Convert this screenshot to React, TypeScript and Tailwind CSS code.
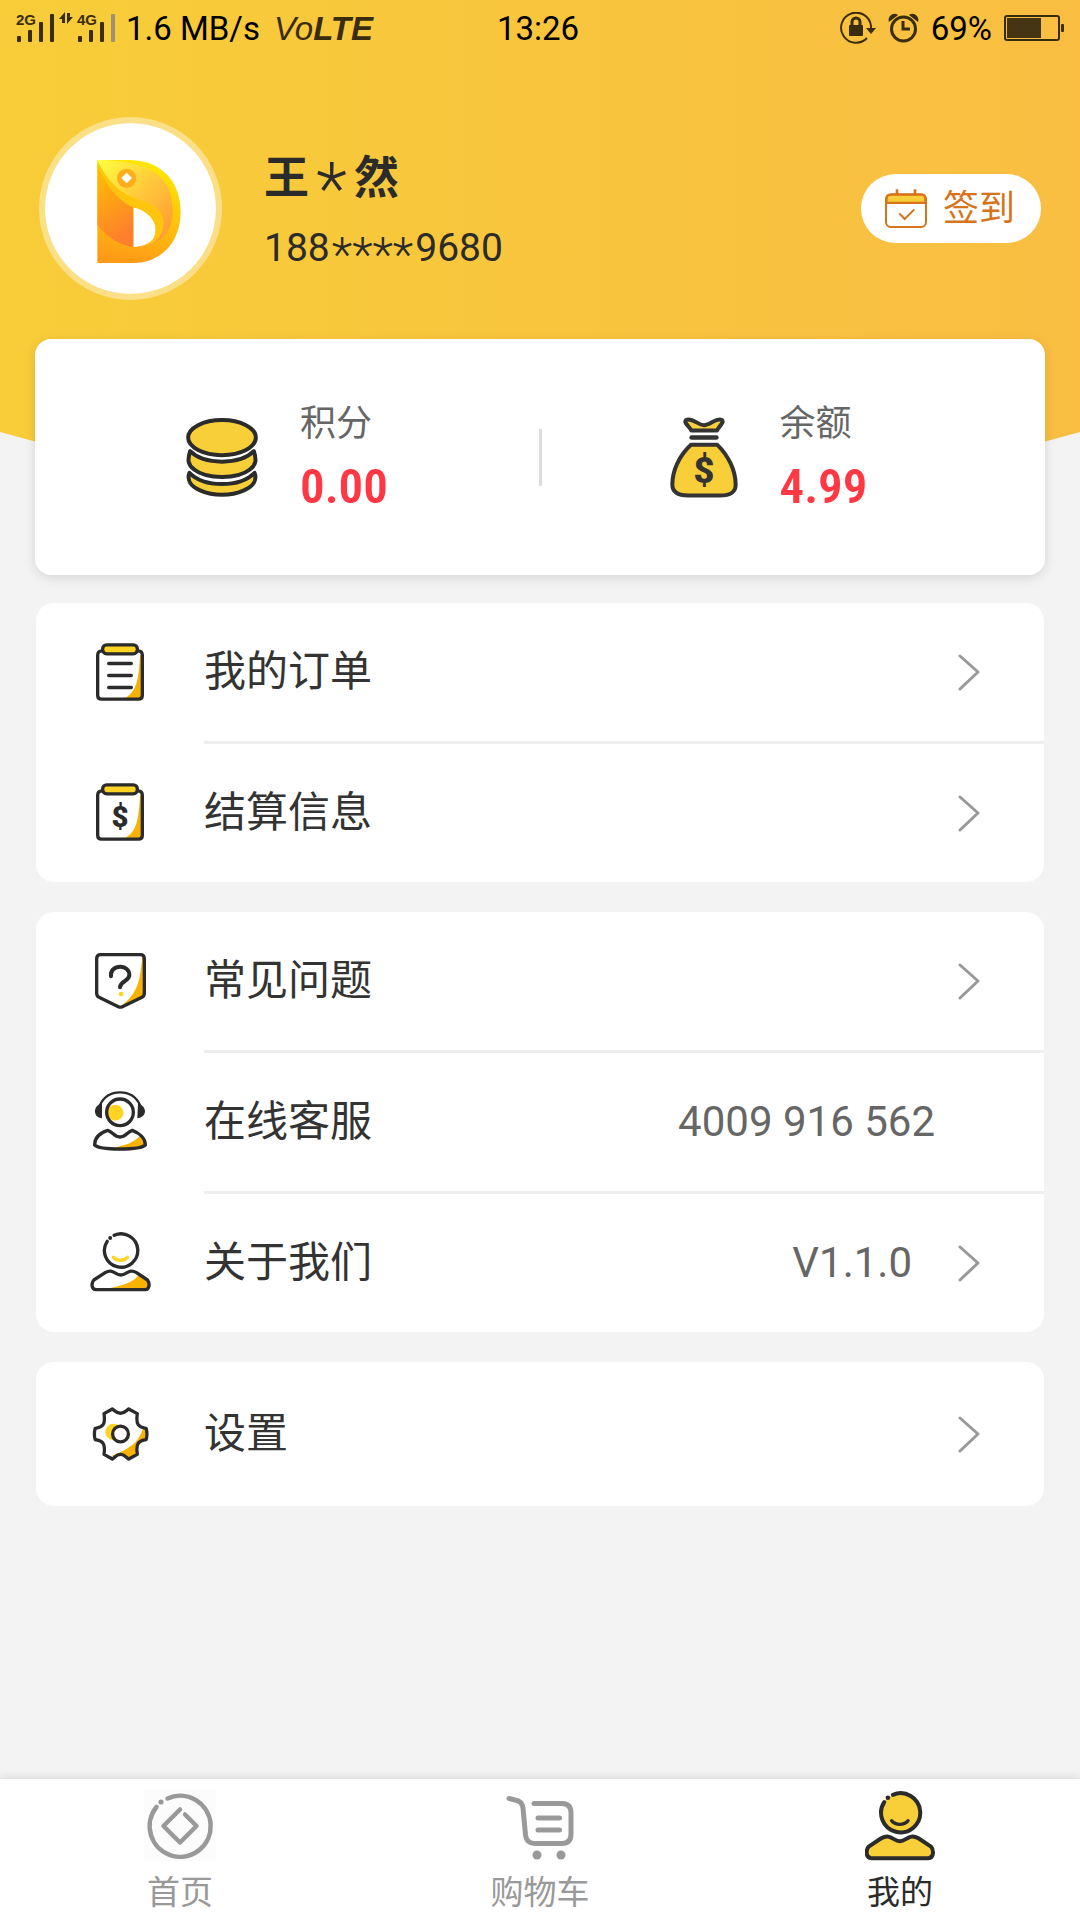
import React from "react";

const DARK = "#2b2b2b";
const YELLOW = "#f9cf39";
const AMBER = "#f9b200";

const SignalIcon = () => (
  <svg className="w-[104px] h-[38px]" viewBox="-4 -4 104 38" fill="#3a2d0f" aria-hidden="true">
    <text x="0" y="12" fontSize="15" fontWeight="700" fontFamily="Liberation Sans">2G</text>
    <rect x="1" y="23" width="4" height="6" rx="1" />
    <rect x="12" y="17" width="4" height="12" rx="1" />
    <rect x="23" y="9" width="4" height="20" rx="1" />
    <rect x="34" y="1" width="4" height="28" rx="1" />
    <path d="M43 6 49 -1V10H46V6ZM57 4 51 11V0H54V4Z" />
    <text x="61" y="12" fontSize="15" fontWeight="700" fontFamily="Liberation Sans">4G</text>
    <rect x="62" y="23" width="4" height="6" rx="1" />
    <rect x="73" y="17" width="4" height="12" rx="1" />
    <rect x="84" y="9" width="4" height="20" rx="1" />
    <rect x="95" y="1" width="4" height="28" rx="1" fill="#9c9075" />
  </svg>
);

const LockIcon = () => (
  <svg className="w-9 h-8" viewBox="0 0 36 32" fill="none" stroke="#3a2d0f" strokeWidth="2" aria-hidden="true">
    <path d="M27 26A15 15 0 1 1 31 14V17" />
    <path d="M26 16H36L31 22Z" fill="#3a2d0f" stroke="none" />
    <rect x="9" y="13" width="14" height="11" rx="1" fill="#3a2d0f" stroke="none" />
    <path d="M12 14V10a4 4 0 0 1 8 0V14" strokeWidth="3" />
  </svg>
);

const AlarmIcon = () => (
  <svg className="w-[31px] h-[30px]" viewBox="0 0 31 30" fill="none" stroke="#3a2d0f" aria-hidden="true">
    <circle cx="15.5" cy="16" r="12" strokeWidth="3" />
    <path d="M15 8V16H22" strokeWidth="3" />
    <path d="M1 9C-1 4 5-2 10 2ZM30 9C32 4 26-2 21 2Z" fill="#3a2d0f" stroke="none" />
  </svg>
);

const BatteryIcon = () => (
  <svg className="w-[60px] h-[26px]" viewBox="0 0 60 26" fill="none" aria-hidden="true">
    <rect x="1" y="1" width="54" height="24" rx="2" stroke="#3a2d0f" strokeWidth="2" />
    <rect x="3" y="3" width="34" height="20" fill="#453515" />
    <rect x="57" y="9" width="3" height="8" rx="1" fill="#3a2d0f" />
  </svg>
);

const Logo = () => (
  <svg className="w-[84px] h-[103px]" viewBox="232 180 250 309" aria-hidden="true">
    <defs>
      <linearGradient id="logoBody" x1="0.6" y1="0" x2="0.4" y2="1">
        <stop offset="0" stopColor="#ffe800" />
        <stop offset="0.5" stopColor="#ffc60b" />
        <stop offset="1" stopColor="#ff9a18" />
      </linearGradient>
      <linearGradient id="logoStem" x1="0" y1="0" x2="0.3" y2="1">
        <stop offset="0" stopColor="#ffc400" />
        <stop offset="1" stopColor="#ff7f2c" />
      </linearGradient>
      <linearGradient id="logoFish" x1="0" y1="0" x2="0.9" y2="1">
        <stop offset="0" stopColor="#ffff40" />
        <stop offset="0.5" stopColor="#ffc83a" />
        <stop offset="1" stopColor="#ff9632" />
      </linearGradient>
    </defs>
    <path
      d="M232 180H330C430 182 482 250 482 335C482 430 420 489 340 489H232ZM340 322V441C385 440 407 420 407 390C407 355 375 330 340 322Z"
      fill="url(#logoBody)"
      fillRule="evenodd"
    />
    <path d="M232 190C252 245 290 300 340 322V441C300 436 262 412 232 375Z" fill="url(#logoStem)" />
    <path
      d="M232 180C330 180 380 200 410 222C445 247 458 290 458 335C458 390 425 440 350 441C405 436 430 400 430 370C430 335 405 315 375 305C320 288 275 270 232 180Z"
      fill="url(#logoFish)"
    />
    <path d="M232 182C275 270 320 288 375 305C405 315 430 335 430 370C430 405 408 432 372 438C396 428 407 412 407 390C407 355 375 330 340 322C290 300 252 245 232 182Z" fill="#ffc50c" />
    <circle cx="320" cy="235" r="29" fill="#ffad1c" />
    <path d="M320 218 336 234 320 250 304 234Z" fill="#fff" />
  </svg>
);

const CalendarIcon = () => (
  <svg className="w-[42px] h-[39px]" viewBox="135 123 126 117" fill="none" stroke="#d6741c" strokeWidth="6" aria-hidden="true">
    <path d="M140 164V152Q140 140 152 140H244Q256 140 256 152V164Z" fill={YELLOW} />
    <rect x="138" y="139" width="120" height="98" rx="14" />
    <path d="M138 165H258" />
    <path d="M171 139V124M225 139V124" strokeWidth="8" />
    <path d="M178 196 194 213 223 184" />
  </svg>
);

const CoinsIcon = () => (
  <svg className="w-[72px] h-[79px]" viewBox="78 110 216 238" fill={YELLOW} stroke={DARK} strokeWidth="12" strokeLinejoin="round" aria-hidden="true">
    <ellipse cx="186" cy="169" rx="102" ry="53" />
    <path d="M90 210C82 235 82 250 102 265C140 295 232 295 270 265C290 250 290 235 282 210C240 252 132 252 90 210Z" />
    <path d="M88 275C80 295 90 315 120 328C160 346 212 346 252 328C282 315 292 295 284 275C240 320 132 320 88 275Z" />
  </svg>
);

const MoneyBagIcon = () => (
  <svg className="w-[68px] h-[81px]" viewBox="91 116 204 242" fill={YELLOW} stroke="#333" strokeWidth="12" strokeLinejoin="round" strokeLinecap="round" aria-hidden="true">
    <path d="M140 124C160 118 175 140 193 140C212 140 227 118 246 124C256 132 238 142 232 156H155C148 142 130 132 140 124Z" />
    <path d="M156 177H230" strokeWidth="14" />
    <path d="M154 199H233C265 230 288 275 288 318C288 340 275 351 240 351H146C112 351 98 340 98 318C98 275 120 230 154 199Z" />
    <text x="193" y="312" fontSize="108" fontWeight="900" fontFamily="Roboto" textAnchor="middle" fill="#333" stroke="none">$</text>
  </svg>
);

const OrderIcon = () => (
  <svg className="w-12 h-[58px]" viewBox="198 124 144 173" fill="none" stroke={DARK} strokeWidth="10" strokeLinejoin="round" strokeLinecap="round" aria-hidden="true">
    <path d="M333 160V290H282C318 272 326 240 330 160Z" fill={AMBER} stroke="none" />
    <path d="M216 147Q203 147 203 160V280Q203 292 215 292H325Q337 292 337 280V160Q337 147 324 147" />
    <rect x="218" y="129" width="104" height="27" rx="12" fill="#ffd321" />
    <path d="M236 185H304M236 221H304M236 257H304" />
  </svg>
);

const BillIcon = () => (
  <svg className="w-12 h-[58px]" viewBox="198 124 144 173" fill="none" stroke={DARK} strokeWidth="10" strokeLinejoin="round" strokeLinecap="round" aria-hidden="true">
    <path d="M333 160V290H282C318 272 326 240 330 160Z" fill={AMBER} stroke="none" />
    <path d="M216 147Q203 147 203 160V280Q203 292 215 292H325Q337 292 337 280V160Q337 147 324 147" />
    <rect x="218" y="129" width="104" height="27" rx="12" fill="#ffd321" />
    <text x="270" y="256" fontSize="88" fontWeight="900" fontFamily="Roboto" textAnchor="middle" fill={DARK} stroke="none">$</text>
  </svg>
);

const QuestionIcon = () => (
  <svg className="w-[51px] h-14" viewBox="198 162 153 168" fill="none" stroke={DARK} strokeWidth="10" strokeLinejoin="round" strokeLinecap="round" aria-hidden="true">
    <path d="M342 172V292L275 323C320 285 332 265 340 172Z" fill={AMBER} stroke="none" />
    <path d="M215 167H334Q346 167 346 179V283Q346 291 339 295L280 323Q274 326 268 323L210 295Q203 291 203 283V179Q203 167 215 167Z" />
    <path d="M246 232C244 214 257 203 274 203C290 203 301 214 301 228C301 248 273 245 273 265" strokeWidth="12" />
    <circle cx="276" cy="285" r="7" fill="#ffd321" stroke="none" />
  </svg>
);

const SupportIcon = () => (
  <svg className="w-[54px] h-[60px]" viewBox="189 576 162 180" fill="none" stroke={DARK} strokeWidth="10" strokeLinejoin="round" strokeLinecap="round" aria-hidden="true">
    <path d="M210 618C222 592 245 580 270 580C296 580 318 592 330 618" strokeWidth="7" />
    <path d="M216 614C200 616 195 628 195 637C195 648 202 656 216 658ZM324 614C338 616 345 628 345 637C345 648 336 656 322 658Z" fill={DARK} stroke="none" />
    <circle cx="256" cy="641" r="24" fill="#ffd321" stroke="none" />
    <circle cx="270" cy="640" r="40" />
    <path d="M331 710 346 740 300 749H240C290 738 312 730 331 710Z" fill={AMBER} stroke="none" />
    <path d="M233 694C248 698 252 714 270 714C288 714 292 698 307 694C328 702 346 718 346 738C330 754 210 754 194 738C194 718 208 702 233 694Z" />
  </svg>
);

const AboutIcon = () => (
  <svg className="w-[61px] h-[60px]" viewBox="183 996 182 180" fill="none" stroke={DARK} strokeWidth="10" strokeLinejoin="round" strokeLinecap="round" aria-hidden="true">
    <path d="M234 1024A50 50 0 1 0 255 1006" />
    <circle cx="243" cy="1014" r="6" fill={DARK} stroke="none" />
    <path d="M253 1072C264 1084 284 1084 295 1072" stroke="#ffd321" />
    <path d="M328 1124 358 1142V1168H228C280 1155 315 1148 328 1124Z" fill={AMBER} stroke="none" />
    <path d="M194 1140L228 1118C252 1104 256 1125 275 1125C294 1125 298 1104 322 1118L355 1140C362 1150 362 1168 348 1169H201C186 1168 186 1150 194 1140Z" />
  </svg>
);

const GearIcon = () => (
  <svg className="w-[57px] h-[54px]" viewBox="188 170 172 164" fill="none" stroke={DARK} strokeWidth="10" strokeLinejoin="round" strokeLinecap="round" aria-hidden="true">
    <path d="M342 236H355V268L325 285V315L300 328L275 314L240 322C300 296 326 284 342 236Z" fill={AMBER} stroke="none" />
    <circle cx="253" cy="246" r="25" fill="#ffd321" stroke="none" />
    <circle cx="274" cy="252" r="24" fill="#fff" />
    <path d="M249 176C258 182 262 189 274 189C286 189 290 182 299 176L325 190C324 204 321 214 328 224C335 233 343 233 352 235C355 246 355 258 352 269C343 271 335 271 328 280C321 290 324 300 325 314L299 328C290 322 286 314 274 314C262 314 258 322 249 328L224 314C225 300 228 290 221 280C214 271 206 271 197 269C194 258 194 246 197 235C206 233 214 233 221 224C228 214 225 204 224 190Z" />
  </svg>
);

const Chevron = () => (
  <svg className="w-[22px] h-[37px]" viewBox="0 0 22 37" fill="none" stroke="#999" strokeWidth="3" strokeLinecap="round" strokeLinejoin="round" aria-hidden="true">
    <path d="M2 2 20 18 2 35" />
  </svg>
);

const HomeIcon = () => (
  <svg className="w-[72px] h-[71px] bg-[#fcfcfc]" viewBox="0 0 72 71" fill="none" stroke="#999" strokeWidth="4.5" strokeLinecap="round" strokeLinejoin="round" aria-hidden="true">
    <path d="M12.5 17A30.5 30.5 0 1 0 23.5 8.5" />
    <circle cx="17" cy="12" r="2.6" fill="#999" stroke="none" />
    <path d="M36 19.5 19.5 36 36 52.5 52.5 36 41 24.5" />
  </svg>
);

const CartIcon = () => (
  <svg className="w-[68px] h-[71px]" viewBox="0 0 68 71" fill="none" stroke="#999" strokeWidth="5" strokeLinecap="round" strokeLinejoin="round" aria-hidden="true">
    <path d="M3 8.5 9 10Q16 11 17 18L19.5 45Q20.5 53.5 29 53.5H56Q65 53.5 65 44V23Q65 13.5 56 13.5H28" />
    <path d="M32 28H53.5M32 40H53.5" />
    <circle cx="31" cy="65" r="4.5" fill="#999" stroke="none" />
    <circle cx="55" cy="65" r="4.5" fill="#999" stroke="none" />
  </svg>
);

const MineIcon = () => (
  <svg className="w-[70px] h-[71px]" viewBox="135 92 211 213" fill={YELLOW} stroke={DARK} strokeWidth="12" strokeLinejoin="round" strokeLinecap="round" aria-hidden="true">
    <circle cx="240" cy="161" r="59" stroke="none" />
    <path d="M193 128A59 59 0 1 0 219 106" fill="none" />
    <circle cx="204" cy="115" r="7" fill={DARK} stroke="none" />
    <path d="M215 184C228 199 252 199 265 184" fill="none" strokeWidth="10" />
    <path d="M146 262L184 237C212 221 220 246 240 246C260 246 268 221 296 237L334 262C342 272 344 296 326 297H154C136 296 138 272 146 262Z" />
  </svg>
);

type MenuItem = {
  title: string;
  icon: React.ReactNode;
  value?: string;
  arrow: boolean;
  tall?: boolean;
};

const menuGroups: MenuItem[][] = [
  [
    { title: "我的订单", icon: <OrderIcon />, arrow: true },
    { title: "结算信息", icon: <BillIcon />, arrow: true },
  ],
  [
    { title: "常见问题", icon: <QuestionIcon />, arrow: true },
    { title: "在线客服", icon: <SupportIcon />, value: "4009 916 562", arrow: false },
    { title: "关于我们", icon: <AboutIcon />, value: "V1.1.0", arrow: true },
  ],
  [{ title: "设置", icon: <GearIcon />, arrow: true, tall: true }],
];

const MenuRow = ({ item, first }: { item: MenuItem; first: boolean }) => (
  <li>
    <a href="#" className="flex items-stretch">
      <span className="w-[168px] shrink-0 flex items-center justify-center">{item.icon}</span>
      <span
        className={`flex-1 flex items-center ${item.tall ? "h-36" : "h-[138px]"} ${
          first ? "" : "border-t-3 border-[#eee] box-content"
        } ${item.arrow ? "pr-16" : "pr-[109px]"}`}
      >
        <span className="flex-1 text-[42px] leading-[60px] text-[#333]">{item.title}</span>
        {item.value && <span className="text-[42px] leading-[60px] text-[#666]">{item.value}</span>}
        {item.arrow && (
          <span className="ml-[46px]">
            <Chevron />
          </span>
        )}
      </span>
    </a>
  </li>
);

const Stat = ({ icon, label, value }: { icon: React.ReactNode; label: string; value: string }) => (
  <div className="flex items-center gap-[42px]">
    {icon}
    <div>
      <p className="text-[36px] leading-[52px] text-[#666]">{label}</p>
      <p className="mt-2 text-[49px] leading-[58px] font-semibold text-[#ff3844] font-['Roboto_Condensed',Roboto,sans-serif]">
        {value}
      </p>
    </div>
  </div>
);

const App = () => {
  return (
    <div className="min-h-screen flex flex-col bg-[#f3f3f3] font-[Roboto,'Noto_Sans_CJK_SC',sans-serif]">
      <header className="bg-linear-to-r from-[#f8cd38] to-[#f9be42] pb-44 [clip-path:polygon(0_0,100%_0,100%_calc(100%-44px),85%_100%,15%_100%,0_calc(100%-44px))]">
        {/* status bar */}
        <div className="h-14 pl-3 pr-4 grid grid-cols-[1fr_auto_1fr] items-center text-[33px] leading-none text-black">
          <div className="flex items-center">
            <SignalIcon />
            <span className="ml-2.5">1.6 MB/s</span>
            <span className="ml-3.5 italic text-[#3a2d0f] font-['Liberation_Sans',sans-serif]">
              Vo<span className="font-bold">LTE</span>
            </span>
          </div>
          <span>13:26</span>
          <div className="flex items-center justify-end">
            <LockIcon />
            <span className="ml-3"><AlarmIcon /></span>
            <span className="mx-3">69%</span>
            <BatteryIcon />
          </div>
        </div>

        {/* profile */}
        <div className="mt-[61px] px-[39px] flex items-center">
          <div className="size-[183px] shrink-0 rounded-full bg-white bg-clip-padding border-6 border-white/40 flex items-center justify-center pl-4 pt-1.5">
            <Logo />
          </div>
          <div className="ml-[42px] pt-1 flex-1 text-[#2b2b2b]">
            <h1 className="text-[45px] leading-[66px] font-bold">
              王<span className="inline-block w-[45px] text-center font-light text-[72px] leading-[0] align-[-20px]">*</span>然
            </h1>
            <p className="mt-2 text-[39px] leading-[56px]">
              188<span className="mx-0.5 font-light text-[48px] leading-[0] align-[-10px]">****</span>9680
            </p>
          </div>
          <button className="h-[69px] pl-6 pr-[26px] rounded-full bg-white flex items-center gap-4 text-[36px] text-[#d6741c]">
            <CalendarIcon />
            签到
          </button>
        </div>
      </header>

      <main className="flex-1 px-9 pb-10">
        <section className="relative -mt-[137px] -mx-px h-[236px] rounded-2xl bg-white shadow-[0_3px_12px_rgba(0,0,0,0.12)] grid grid-cols-[1fr_auto_1fr] items-center">
          <div className="pl-[151px]">
            <Stat icon={<CoinsIcon />} label="积分" value="0.00" />
          </div>
          <div className="w-[3px] h-[57px] bg-[#ddd]" />
          <div className="pl-32">
            <Stat icon={<MoneyBagIcon />} label="余额" value="4.99" />
          </div>
        </section>

        <div className="mt-7 flex flex-col gap-[30px]">
          {menuGroups.map((group, i) => (
            <ul key={i} className="rounded-[18px] bg-white overflow-hidden">
              {group.map((item, j) => (
                <MenuRow key={item.title} item={item} first={j === 0} />
              ))}
            </ul>
          ))}
        </div>
      </main>

      <nav className="h-[141px] pt-[11px] grid grid-cols-3 bg-white shadow-[0_-2px_8px_rgba(0,0,0,0.1)] text-[33px] leading-[48px] text-[#999]">
        <a href="#" className="flex flex-col items-center gap-2">
          <HomeIcon />
          首页
        </a>
        <a href="#" className="flex flex-col items-center gap-2">
          <CartIcon />
          购物车
        </a>
        <a href="#" className="flex flex-col items-center gap-2 text-[#2b2b2b]">
          <MineIcon />
          我的
        </a>
      </nav>
    </div>
  );
};

export default App;
